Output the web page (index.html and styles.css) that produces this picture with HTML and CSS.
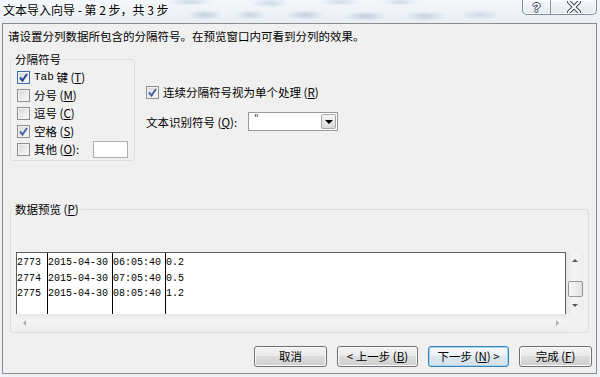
FILE: index.html
```html
<!DOCTYPE html>
<html lang="zh-CN">
<head>
    <meta charset="UTF-8">
    <meta name="viewport" content="width=device-width, initial-scale=1.0">
    <title>文本导入向导</title>
    <link rel="stylesheet" href="styles.css">
</head>
<body>

<div class="titlebar">
    <span class="title">文本导入向导 - 第 2 步，共 3 步</span>
    <div class="caption-buttons">
        <span class="cap-btn help">?</span>
        <span class="cap-btn close">
            <svg width="14" height="12" viewBox="0 0 14 12">
                <path d="M2 1 L12 11 M12 1 L2 11" stroke="#3b4656" stroke-width="4" stroke-linecap="square"/>
                <path d="M2 1 L12 11 M12 1 L2 11" stroke="#fff" stroke-width="2" stroke-linecap="square"/>
            </svg>
        </span>
    </div>
</div>

<div class="dialog">
    <p class="intro">请设置分列数据所包含的分隔符号。在预览窗口内可看到分列的效果。</p>

    <div class="options">
        <fieldset class="group delims">
            <legend>分隔符号</legend>
            <label class="check"><span class="box on focus"><svg width="11" height="11" viewBox="0 0 11 11"><path d="M2 5.5 L4.5 8.5 L9 2" fill="none" stroke="#23449a" stroke-width="2"/></svg></span><span class="tab">Tab</span>&nbsp;键 (<u>T</u>)</label>
            <label class="check"><span class="box"></span>分号 (<u>M</u>)</label>
            <label class="check"><span class="box"></span>逗号 (<u>C</u>)</label>
            <label class="check"><span class="box on"><svg width="11" height="11" viewBox="0 0 11 11"><path d="M2 5.5 L4.5 8.5 L9 2" fill="none" stroke="#4a67ab" stroke-width="2"/></svg></span>空格 (<u>S</u>)</label>
            <label class="check"><span class="box"></span>其他 (<u>O</u>):<span class="other-input"></span></label>
        </fieldset>

        <div class="side">
            <label class="check"><span class="box on"><svg width="11" height="11" viewBox="0 0 11 11"><path d="M2 5.5 L4.5 8.5 L9 2" fill="none" stroke="#4a67ab" stroke-width="2"/></svg></span>连续分隔符号视为单个处理 (<u>R</u>)</label>
            <div class="qualifier">
                <span class="qualifier-label">文本识别符号 (<u>Q</u>):</span>
                <div class="combo">
                    <span class="combo-value">"</span>
                    <span class="combo-arrow"></span>
                </div>
            </div>
        </div>
    </div>

    <fieldset class="group preview">
        <legend>数据预览 (<u>P</u>)</legend>
        <div class="grid-view">
            <div class="data">
                <div class="col"><div>2773</div><div>2774</div><div>2775</div></div>
                <div class="col"><div>2015-04-30</div><div>2015-04-30</div><div>2015-04-30</div></div>
                <div class="col"><div>06:05:40</div><div>07:05:40</div><div>08:05:40</div></div>
                <div class="col"><div>0.2</div><div>0.5</div><div>1.2</div></div>
            </div>
            <div class="vscroll">
                <span class="arrow up"></span>
                <span class="thumb"></span>
                <span class="arrow down"></span>
            </div>
            <div class="hscroll">
                <span class="arrow left"></span>
                <span class="arrow right"></span>
            </div>
            <div class="corner"></div>
        </div>
    </fieldset>

    <div class="buttons">
        <a href="#" class="button small">取消</a>
        <a href="#" class="button">&lt; 上一步 (<u>B</u>)</a>
        <a href="#" class="button default">下一步 (<u>N</u>) &gt;</a>
        <a href="#" class="button small">完成 (<u>F</u>)</a>
    </div>
</div>

</body>
</html>
```

FILE: styles.css
```css
/* Khung cửa sổ */
body {
    margin: 0;
    width: 600px;
    height: 377px;
    overflow: hidden;
    font-family: "Noto Sans CJK SC", "Liberation Sans", sans-serif;
    font-size: 11.5px;
    color: #000;
    background-color: #eef2f6;
}
u {
    text-decoration: underline;
}
.titlebar {
    height: 23px;
    display: flex;
    align-items: flex-start;
    background:
        radial-gradient(ellipse 22px 4px at 190px 2px, rgba(120, 155, 200, 0.35), transparent),
        radial-gradient(ellipse 20px 5px at 270px 3px, rgba(120, 155, 200, 0.3), transparent),
        radial-gradient(ellipse 18px 5px at 205px 15px, rgba(110, 140, 185, 0.35), transparent),
        radial-gradient(ellipse 16px 5px at 250px 15px, rgba(110, 140, 185, 0.3), transparent),
        radial-gradient(ellipse 20px 5px at 305px 15px, rgba(110, 140, 185, 0.35), transparent),
        radial-gradient(ellipse 22px 5px at 365px 16px, rgba(110, 140, 185, 0.35), transparent),
        radial-gradient(ellipse 22px 5px at 425px 16px, rgba(110, 140, 185, 0.3), transparent),
        radial-gradient(ellipse 20px 5px at 480px 15px, rgba(110, 140, 185, 0.25), transparent),
        radial-gradient(ellipse 20px 4px at 340px 2px, rgba(120, 155, 200, 0.3), transparent),
        radial-gradient(ellipse 20px 4px at 400px 2px, rgba(120, 155, 200, 0.3), transparent),
        linear-gradient(#f4f7fa, #e8eef4);
}
.title {
    padding: 1px 0 0 3px;
    font-size: 12px;
    line-height: 17px;
    text-shadow: 0 0 6px #fff, 0 0 3px #fff;
}
.caption-buttons {
    margin-left: auto;
    margin-right: 3px;
    display: flex;
    height: 14px;
    border: 1px solid #7e8b9c;
    border-top: none;
    border-radius: 0 0 5px 5px;
    background: linear-gradient(#f6f8fa, #e3e8ee);
    box-shadow: inset 0 0 0 1px rgba(255, 255, 255, 0.8);
}
.cap-btn {
    display: flex;
    align-items: center;
    justify-content: center;
}
.help {
    width: 27px;
    border-right: 1px solid #8d99a8;
    font-family: "Liberation Sans", sans-serif;
    font-weight: bold;
    font-size: 13px;
    color: #fff;
    line-height: 13px;
    text-shadow: 1px 0 0 #3b4656, -1px 0 0 #3b4656, 0 1px 0 #3b4656, 0 -1px 0 #3b4656;
}
.close {
    width: 45px;
}

/* Hộp thoại */
.dialog {
    margin: 0 3px 0 2px;
    height: 351px;
    box-sizing: border-box;
    border: 1px solid #8c8c8c;
    background-color: #f0f0f0;
}
.intro {
    margin: 0;
    padding: 4px 0 0 5px;
    line-height: 17px;
}
.options {
    display: flex;
    align-items: flex-start;
    margin-top: 7px;
    padding-left: 7px;
}
.group {
    margin: 0;
    min-width: 0;
    box-sizing: border-box;
    border: 1px solid #d5dfe5;
    border-radius: 3px;
}
.group legend {
    padding: 0 2px;
    line-height: 14px;
}
.delims {
    width: 125px;
    padding: 2px 6px 2px 6px;
}
.delims legend {
    margin-left: -4px;
}
.check {
    display: flex;
    align-items: center;
    height: 18px;
    white-space: pre;
}
.box {
    width: 13px;
    height: 13px;
    flex: none;
    box-sizing: border-box;
    margin-right: 4px;
    border: 1px solid #8e8f8f;
    background: linear-gradient(135deg, #d6d6d6, #fbfbfb);
    box-shadow: inset 0 0 0 1px #f2f2f2;
    display: flex;
    align-items: center;
    justify-content: center;
}
.box.focus {
    border-color: #3c6fb0;
}
.tab {
    font-family: "Liberation Mono", monospace;
    font-size: 11px;
}
.other-input {
    margin-left: auto;
    width: 35px;
    height: 17px;
    box-sizing: border-box;
    border: 1px solid #abadb3;
    background-color: #fff;
}
.side {
    margin-left: 11px;
    padding-top: 31px;
}
.qualifier {
    display: flex;
    align-items: center;
    margin-top: 11px;
    height: 19px;
}
.qualifier-label {
    width: 102px;
}
.combo {
    width: 90px;
    height: 19px;
    box-sizing: border-box;
    border: 1px solid #9a9a9a;
    background-color: #fff;
    display: flex;
}
.combo-value {
    padding: 0 0 0 5px;
    line-height: 11px;
    font-size: 10px;
    color: #333;
}
.combo-arrow {
    margin: 1px 1px 1px auto;
    width: 15px;
    box-sizing: border-box;
    border: 1px solid #a8a8a8;
    border-radius: 2px;
    background: linear-gradient(#f6f6f6, #dadada);
    display: flex;
    align-items: center;
    justify-content: center;
}
.combo-arrow::after {
    content: "";
    border-left: 4px solid transparent;
    border-right: 4px solid transparent;
    border-top: 4px solid #000;
}

/* Xem trước dữ liệu */
.preview {
    width: 579px;
    margin: 41px 0 0 7px;
    padding: 36px 4px 1px 5px;
}
.preview legend {
    margin-left: -3px;
}
.grid-view {
    display: grid;
    grid-template-columns: 550px 18px;
    grid-template-rows: 62px 17px;
}
.data {
    display: grid;
    grid-template-columns: 30px 65px 53px 1fr;
    border: 1px solid #5c5c5c;
    border-bottom: none;
    background-color: #fff;
    font-family: "Liberation Mono", monospace;
    font-size: 10px;
    line-height: 15.5px;
    overflow: hidden;
}
.data .col {
    padding-top: 2px;
}
.data .col + .col {
    border-left: 1px solid #000;
}
.vscroll {
    display: flex;
    flex-direction: column;
    align-items: center;
    background: linear-gradient(90deg, #e6e6e6, #f4f4f4 40%, #ececec);
}
.hscroll {
    display: flex;
    justify-content: space-between;
    align-items: center;
    background: linear-gradient(#e6e6e6, #f4f4f4 40%, #ececec);
}
.corner {
    background-color: #f0f0f0;
}
.arrow {
    width: 17px;
    height: 17px;
    flex: none;
    display: flex;
    align-items: center;
    justify-content: center;
}
.arrow::after {
    content: "";
}
.arrow.up::after {
    border-left: 3px solid transparent;
    border-right: 3px solid transparent;
    border-bottom: 3px solid #555;
}
.arrow.down::after {
    border-left: 3px solid transparent;
    border-right: 3px solid transparent;
    border-top: 3px solid #555;
}
.arrow.left::after {
    border-top: 3px solid transparent;
    border-bottom: 3px solid transparent;
    border-right: 3px solid #aaa;
}
.arrow.right::after {
    border-top: 3px solid transparent;
    border-bottom: 3px solid transparent;
    border-left: 3px solid #aaa;
}
.thumb {
    margin-top: auto;
    width: 15px;
    height: 16px;
    box-sizing: border-box;
    border: 1px solid #979797;
    border-radius: 2px;
    background: linear-gradient(90deg, #f6f6f6, #e2e2e2);
}

/* Nút bấm */
.buttons {
    display: flex;
    justify-content: flex-end;
    gap: 10px;
    margin-top: 13px;
    padding-right: 4px;
}
.button {
    width: 81px;
    height: 21px;
    box-sizing: border-box;
    border: 1px solid #707070;
    border-radius: 3px;
    background: linear-gradient(#f2f2f2 0%, #ebebeb 45%, #dddddd 50%, #cfcfcf 100%);
    box-shadow: inset 0 0 0 1px #fbfbfb;
    color: #000;
    text-decoration: none;
    text-align: center;
    line-height: 19px;
    white-space: pre;
}
.button.small {
    width: 73px;
}
.button.default {
    border-color: #3c7fb1;
    background: linear-gradient(#f4f9fc 0%, #eaf1f6 45%, #dde7ef 50%, #d4dfe8 100%);
    box-shadow: inset 0 0 0 1px #9fd7f4;
}
```
